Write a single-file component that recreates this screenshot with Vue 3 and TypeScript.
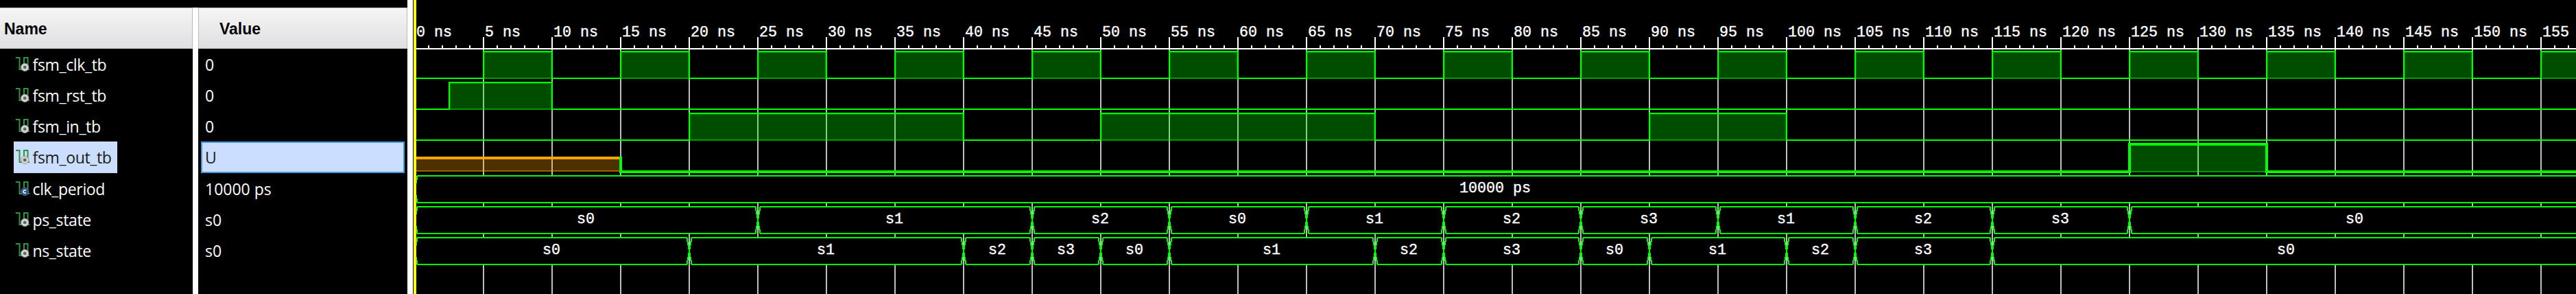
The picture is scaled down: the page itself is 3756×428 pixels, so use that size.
<script setup lang="ts">
interface Signal { name: string; value: string; kind: 'signal' | 'constant'; selected?: boolean }
interface Bus { y: number; edges: number[]; labels: string[] }

const signals: Signal[] = [
  { name: 'fsm_clk_tb', value: '0', kind: 'signal' },
  { name: 'fsm_rst_tb', value: '0', kind: 'signal' },
  { name: 'fsm_in_tb', value: '0', kind: 'signal' },
  { name: 'fsm_out_tb', value: 'U', kind: 'signal', selected: true },
  { name: 'clk_period', value: '10000 ps', kind: 'constant' },
  { name: 'ps_state', value: 's0', kind: 'signal' },
  { name: 'ns_state', value: 's0', kind: 'signal' },
]

// Canvas starts at the cursor; time zero is 2px in, 20px per nanosecond.
const W = 3153
const x = (ns: number): number => 2 + ns * 20
const majors = Array.from({ length: 32 }, (_, i) => i * 5)
const minors = Array.from({ length: 158 }, (_, i) => i).filter((n) => n % 5 !== 0)

const clock = Array.from({ length: 16 }, (_, i): [number, number] => [5 + i * 10, 10 + i * 10])
const bits: { y: number; highs: [number, number][] }[] = [
  { y: 75, highs: clock },
  { y: 120, highs: [[2.5, 10]] },
  { y: 165, highs: [[20, 40], [50, 70], [90, 100]] },
]
const wave = (y: number, highs: [number, number][]): string => {
  let d = `M0 ${y + 39}`
  for (const [a, b] of highs) d += `H${x(a)}V${y}H${x(b)}V${y + 39}`
  return d + `H${W + 200}`
}
// The last interval of each bus runs past the visible edge.
const buses: Bus[] = [
  { y: 256, edges: [0, 157.6], labels: ['10000 ps'] },
  { y: 301, edges: [0, 25, 45, 55, 65, 75, 85, 95, 105, 115, 125, 157.9], labels: ['s0', 's1', 's2', 's0', 's1', 's2', 's3', 's1', 's2', 's3', 's0'] },
  { y: 346, edges: [0, 20, 40, 45, 50, 55, 70, 75, 85, 90, 100, 105, 115, 157.9], labels: ['s0', 's1', 's2', 's3', 's0', 's1', 's2', 's3', 's0', 's1', 's2', 's3', 's0'] },
]
const cell = (bus: Bus, i: number): string => {
  const a = x(bus.edges[i])
  const b = i === bus.labels.length - 1 ? W + 60 : x(bus.edges[i + 1])
  const m = bus.y + 19.5, h = bus.y + 39
  return `M${a} ${m}L${a + 3.5} ${bus.y}H${b - 3.5}L${b} ${m}L${b - 3.5} ${h}H${a + 3.5}Z`
}
const mid = (bus: Bus, i: number): number => (x(bus.edges[i]) + x(bus.edges[i + 1])) / 2 - 1
</script>

<template>
  <main class="viewer">
    <section class="panel names">
      <header class="head">Name</header>
      <div v-for="s in signals" :key="s.name" class="row" :class="{ tall: s.selected }">
        <div class="tag" :class="{ selected: s.selected }">
          <svg class="icon" viewBox="0 0 20 24" width="20" height="24">
            <path d="M0 2H5.5V19H12V2H17.5V19H20" fill="none" stroke="#2f9440" stroke-width="2" />
            <template v-if="s.kind === 'signal'">
              <circle cx="13.2" cy="15.9" r="5.6" fill="#d4d4d4" stroke="#999" stroke-width="1" />
              <circle cx="13.2" cy="15.9" r="2.4" fill="#666" />
            </template>
            <template v-else>
              <circle cx="13.2" cy="15.9" r="5.6" fill="#34548c" stroke="#4a689e" stroke-width="1" />
              <path d="M14.9 14.4A2.2 2.2 0 1 0 14.9 17.4" fill="none" stroke="#fff" stroke-width="1.5" />
            </template>
          </svg>
          <span class="txt name">{{ s.name }}</span>
        </div>
      </div>
    </section>
    <section class="panel values">
      <header class="head">Value</header>
      <div v-for="s in signals" :key="s.name" class="row" :class="{ tall: s.selected }">
        <div class="val" :class="{ selected: s.selected }"><span class="txt">{{ s.value }}</span></div>
      </div>
    </section>
    <section class="waves">
      <svg :width="W" height="428" :viewBox="`0 0 ${W} 428`" shape-rendering="crispEdges">
        <path v-for="t in majors.slice(1)" :key="'g' + t" :d="`M${x(t)} 72V428`" class="grid" />
        <path v-for="t in majors.slice(1)" :key="'M' + t" :d="`M${x(t)} 54V71`" class="axis" />
        <path v-for="t in minors" :key="'m' + t" :d="`M${x(t)} 66V71`" class="axis" />
        <path :d="`M0 71H${W}`" class="axis" />
        <text v-for="t in majors" :key="'l' + t" :x="x(t) + 2" y="53" class="mono">{{ t === 155 ? '155' : t + ' ns' }}</text>

        <g v-for="b in bits" :key="b.y">
          <path :d="wave(b.y, b.highs)" class="line" />
          <g v-for="h in b.highs" :key="h[0]">
            <path v-for="t in majors.filter((n) => n > h[0] && n < h[1])" :key="t" :d="`M${x(t)} ${b.y + 1}V${b.y + 40}`" class="grid" />
            <rect :x="x(h[0]) + 1" :y="b.y + 1" :width="x(h[1]) - x(h[0]) - 2" height="39" class="fill" />
            <path :d="`M${x(h[0]) + 1.5} ${b.y + 39}V${b.y + 1.5}H${x(h[1]) - 1.5}V${b.y + 39}`" class="edge" />
            <rect :x="x(h[0]) + 1" :y="b.y + 38" :width="x(h[1]) - x(h[0]) - 2" height="2" class="fill" />
            <rect :x="x(h[0]) + 1" :y="b.y + 38" :width="x(h[1]) - x(h[0]) - 2" height="1" class="fill" />
          </g>
        </g>

        <rect x="0" y="230" width="302" height="20" class="ufill" />
        <rect x="0" y="248" width="302" height="2" class="ufill" />
        <rect x="0" y="248" width="302" height="1" class="ufill" />
        <path d="M0 230H302" class="uline" />
        <path :d="`M302 228V250H${x(125)}V210H${x(135)}V250H${W}`" class="line thick" />
        <rect :x="x(125)" y="210" :width="x(135) - x(125)" height="41" class="fill" />
        <rect :x="x(125)" y="249" :width="x(135) - x(125)" height="2" class="fill" />
        <rect :x="x(125)" y="249" :width="x(135) - x(125)" height="1" class="fill" />
        <path :d="`M${x(125)} 252V210H${x(135)}V252`" class="line thick" />

        <g v-for="bus in buses" :key="bus.y">
          <path v-for="(_, i) in bus.labels" :key="i" :d="cell(bus, i)" class="bus" />
          <text v-for="(l, i) in bus.labels" :key="'t' + i" :x="mid(bus, i)" :y="bus.y + 24" class="mono center">{{ l }}</text>
        </g>
        <path d="M2 0V428" class="cursor" />
      </svg>
    </section>
  </main>
</template>

<style>
body { margin: 0; background: #000; overflow: hidden; }
</style>

<style scoped>
.viewer { display: flex; width: 3756px; height: 428px; background: #000; overflow: hidden; }
.panel { box-sizing: border-box; margin-top: 11px; height: 417px; flex: none; }
.names { width: 281px; }
.values { width: 313px; border-left: 8px solid #fff; }
.values .head { padding-left: 30px; }
.head {
  box-sizing: border-box; height: 60px; border: 1px solid #b9bbb9;
  background: linear-gradient(#f5f5f5, #dfdfe1); color: #000;
  font: bold 23px/60px "Liberation Sans", Arial, sans-serif;
}
.names .head { border-left: 0; padding-left: 6px; }
.row { height: 45px; display: flex; align-items: stretch; }
.row.tall { height: 46px; }
.tag { margin-left: 20px; padding: 0 8px 0 2.5px; display: flex; align-items: flex-start; color: #fff; }
.icon { flex: none; margin: 11px 5px 0 0; }
.txt { font: 23px/47px "Open Sans", "Noto Sans", sans-serif; height: 45px; white-space: pre; }
.name { letter-spacing: -0.35px; }
.val { box-sizing: border-box; flex: 1; margin: 0 4px; padding-left: 6px; color: #fff; }
.val .txt { display: block; }
.selected { background: #ccdeff; color: #1a1a1a; }
.val.selected { border: 2px solid #439ad8; padding-left: 4px; line-height: 1; }
.val.selected .txt { line-height: 43px; height: 42px; }
.waves { flex: none; width: 3162px; box-sizing: border-box; border-left: 8px solid #fff; padding-left: 1px; height: 428px; overflow: hidden; }
.waves svg { display: block; }
.grid { stroke: #bebebe; stroke-width: 2; }
.axis { stroke: #fff; stroke-width: 2; }
.line { stroke: #0f0; stroke-width: 2; fill: none; }
.thick { stroke-width: 4; }
.fill { fill: rgba(0, 255, 0, 0.3); }
.edge { fill: none; stroke: rgba(0, 255, 0, 0.3); stroke-width: 1; }
.ufill { fill: rgba(255, 165, 0, 0.3); }
.uline { stroke: #ffa500; stroke-width: 4; }
.bus { fill: #000; stroke: #0f0; stroke-width: 2; }
.mono { fill: #fff; stroke: #fff; stroke-width: 0.4; font: 21.67px "Liberation Mono", monospace; white-space: pre; }
.center { text-anchor: middle; }
.cursor { stroke: #ff0; stroke-width: 4; }
</style>
